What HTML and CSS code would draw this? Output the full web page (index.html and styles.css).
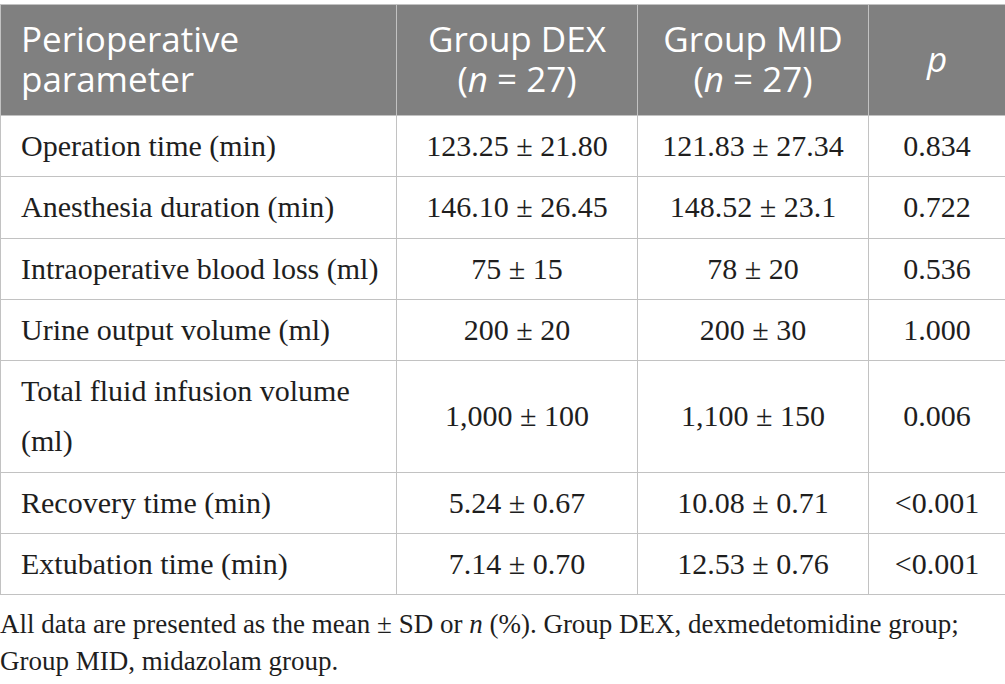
FILE: index.html
```html
<!DOCTYPE html>
<html lang="en">
<head>
<meta charset="utf-8">
<title>Perioperative parameters</title>
<link rel="stylesheet" href="styles.css">
</head>
<body>
<div class="page">
  <table class="data">
    <colgroup>
      <col class="c1"><col class="c2"><col class="c3"><col class="c4">
    </colgroup>
    <thead>
      <tr>
        <th class="left">Perioperative parameter</th>
        <th>Group DEX<br>(<i>n</i> = 27)</th>
        <th>Group MID<br>(<i>n</i> = 27)</th>
        <th><i>p</i></th>
      </tr>
    </thead>
    <tbody>
      <tr><td class="left">Operation time (min)</td><td>123.25 ± 21.80</td><td>121.83 ± 27.34</td><td>0.834</td></tr>
      <tr><td class="left">Anesthesia duration (min)</td><td>146.10 ± 26.45</td><td>148.52 ± 23.1</td><td>0.722</td></tr>
      <tr><td class="left">Intraoperative blood loss (ml)</td><td>75 ± 15</td><td>78 ± 20</td><td>0.536</td></tr>
      <tr><td class="left">Urine output volume (ml)</td><td>200 ± 20</td><td>200 ± 30</td><td>1.000</td></tr>
      <tr><td class="left">Total fluid infusion volume<br>(ml)</td><td>1,000 ± 100</td><td>1,100 ± 150</td><td>0.006</td></tr>
      <tr><td class="left">Recovery time (min)</td><td>5.24 ± 0.67</td><td>10.08 ± 0.71</td><td>&lt;0.001</td></tr>
      <tr><td class="left">Extubation time (min)</td><td>7.14 ± 0.70</td><td>12.53 ± 0.76</td><td>&lt;0.001</td></tr>
    </tbody>
  </table>
  <p class="note">All data are presented as the mean ± SD or <i>n</i> (%). Group DEX, dexmedetomidine group; Group MID, midazolam group.</p>
</div>
</body>
</html>
```
FILE: styles.css
```css
html, body {
  margin: 0;
  padding: 0;
  background: #ffffff;
}

.page {
  width: 1005px;
  padding-top: 4px;
}

.data {
  width: 1005px;
  table-layout: fixed;
  border-collapse: collapse;
  border: 1px solid #c2c2c2;
}

.c1 { width: 396px; }
.c2 { width: 241px; }
.c3 { width: 231px; }
.c4 { width: 137px; }

.data th {
  background: #808080;
  color: #ffffff;
  font-family: "Open Sans", "Liberation Sans", sans-serif;
  font-weight: 400;
  font-size: 35px;
  line-height: 40px;
  padding: 14px 20px 16px;
  text-align: center;
  vertical-align: middle;
  border: 1px solid #c2c2c2;
}

.data td {
  font-family: "Liberation Serif", "Times New Roman", serif;
  font-size: 30px;
  line-height: 50.3px;
  color: #1e1e1e;
  padding: 5px 20px;
  text-align: center;
  vertical-align: middle;
  border: 1px solid #c2c2c2;
}

.data .left {
  text-align: left;
  padding-right: 0;
  white-space: nowrap;
}

.data th.left {
  white-space: normal;
}

.note {
  margin: 11px 0 0;
  font-family: "Liberation Serif", "Times New Roman", serif;
  font-size: 27px;
  line-height: 37px;
  color: #1e1e1e;
}
```
